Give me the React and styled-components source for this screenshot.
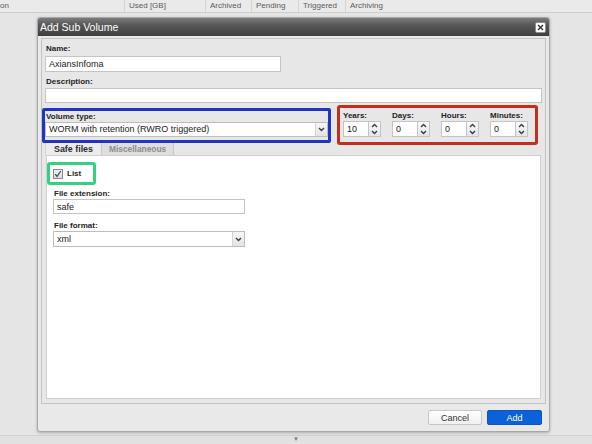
import React from "react";
import styled, { createGlobalStyle } from "styled-components";

const GlobalStyle = createGlobalStyle`
  html, body { margin: 0; padding: 0; }
  body { background: #e5e5e5; font-family: "Liberation Sans", Arial, sans-serif; }
  * { box-sizing: border-box; }
`;

const Page = styled.div`
  position: relative;
  width: 592px;
  height: 444px;
  overflow: hidden;
  display: flex;
  flex-direction: column;
  background: #e5e5e5;
`;

const GridHeader = styled.div`
  display: flex;
  height: 13px;
  border-bottom: 1px solid #cdcdcd;
  background: #eaeaea;
  font-size: 8px;
  color: #5a5a5a;
`;

const HeaderCell = styled.div`
  ${(p) => (p.$w ? `width: ${p.$w}px;` : "flex: 1;")}
  padding-left: ${(p) => p.$pad}px;
  line-height: 12px;
  white-space: nowrap;
  overflow: hidden;
  border-right: ${(p) => (p.$last ? "none" : "1px solid #d5d5d5")};
`;

const GridBody = styled.div`
  flex: 1;
`;

const BottomBar = styled.div`
  height: 9px;
  border-top: 1px solid #d2d2d2;
  background: #e1e1e1;
  display: flex;
  justify-content: center;
  font-size: 6px;
  line-height: 7px;
  color: #777;
`;

const Dialog = styled.div`
  position: absolute;
  left: 37px;
  top: 17px;
  width: 513px;
  height: 415px;
  background: #e9e9e9;
  border: 1px solid #a8a8a8;
  border-radius: 3px;
  box-shadow: 0 1px 3px rgba(0, 0, 0, 0.25);
  display: flex;
  flex-direction: column;
  overflow: hidden;
`;

const TitleBar = styled.div`
  height: 18px;
  flex: none;
  background: linear-gradient(to bottom, #7b7b7b 0%, #575757 40%, #3e3e3e 100%);
  color: #fff;
  font-size: 10.5px;
  display: flex;
  align-items: center;
  justify-content: space-between;
  padding: 0 3px 0 2px;
`;

const CloseBtn = styled.div`
  width: 11px;
  height: 11px;
  background: #fff;
  border: 1px solid #8e8e8e;
  border-radius: 2px;
  display: flex;
  align-items: center;
  justify-content: center;
`;

const Body = styled.div`
  flex: 1;
  padding: 2px 3px 0 3px;
  display: flex;
  flex-direction: column;
`;

const InnerPanel = styled.div`
  flex: 1;
  border: 1px solid #c3c3c3;
  background: #e7e7e7;
  padding: 0 3px 4px 3px;
  display: flex;
  flex-direction: column;
`;

const Label = styled.div`
  font-size: ${(p) => p.$size || 8}px;
  font-weight: bold;
  line-height: 10px;
  color: #1e1e1e;
  margin-top: ${(p) => p.$mt || 0}px;
  margin-left: 1px;
  white-space: nowrap;
`;

const TextInput = styled.div`
  width: ${(p) => (p.$w ? `${p.$w}px` : "100%")};
  height: ${(p) => p.$h || 16}px;
  margin-top: ${(p) => p.$mt || 0}px;
  background: #fff;
  border: 1px solid #c4c4c4;
  font-size: 9px;
  color: #222;
  padding-left: 3px;
  display: flex;
  align-items: center;
`;

const SelectBox = styled.div`
  width: ${(p) => (p.$w ? `${p.$w}px` : "100%")};
  height: ${(p) => p.$h || 16}px;
  background: #fff;
  border: 1px solid #bdbdbd;
  font-size: 9px;
  color: #222;
  display: flex;
  align-items: stretch;
`;

const SelectText = styled.div`
  flex: 1;
  padding-left: 3px;
  display: flex;
  align-items: center;
`;

const SelectArrow = styled.div`
  width: 12px;
  background: linear-gradient(to bottom, #f7f7f7, #e3e3e3);
  border-left: 1px solid #d4d4d4;
  display: flex;
  align-items: center;
  justify-content: center;
`;

const SettingsRow = styled.div`
  display: flex;
  align-items: center;
  margin-top: 2px;
`;

const TypeHighlight = styled.div`
  width: 289px;
  margin-left: -3px;
  border: 3px solid #1f35c4;
  border-radius: 2px;
  padding: 1px 0 3px 0;
  display: flex;
  flex-direction: column;
`;

const RetentionHighlight = styled.div`
  width: 201px;
  height: 40px;
  margin-left: 6px;
  border: 3px solid #c2301d;
  border-radius: 3px;
  padding: 3px 0 0 3px;
  display: flex;
`;

const SpinGroup = styled.div`
  width: 38px;
  margin-right: 11px;
  display: flex;
  flex-direction: column;
`;

const SpinRow = styled.div`
  display: flex;
  height: 16px;
`;

const SpinInput = styled.div`
  width: 26px;
  background: #fff;
  border: 1px solid #c4c4c4;
  font-size: 9px;
  color: #222;
  padding-left: 3px;
  display: flex;
  align-items: center;
`;

const SpinButtons = styled.div`
  width: 12px;
  border: 1px solid #c4c4c4;
  border-left: none;
  background: linear-gradient(to bottom, #fafafa, #e6e6e6);
  display: flex;
  flex-direction: column;
  align-items: center;
  justify-content: space-around;
`;

const TabStrip = styled.div`
  display: flex;
  height: 12px;
  margin-top: -2px;
`;

const Tab = styled.div`
  padding: 0 ${(p) => (p.$active ? 8 : 7)}px 0 ${(p) => (p.$active ? 8 : 7)}px;
  font-size: ${(p) => (p.$active ? 8.9 : 8.4)}px;
  font-weight: bold;
  line-height: 12px;
  color: ${(p) => (p.$active ? "#2a2a2a" : "#8c8c8c")};
  background: ${(p) => (p.$active ? "#ececec" : "#dedede")};
  border-right: 1px solid #c9c9c9;
  border-left: ${(p) => (p.$first ? "1px solid #d6d6d6" : "none")};
`;

const TabContent = styled.div`
  flex: 1;
  margin: 0 1px 0 1px;
  background: #fff;
  border: 1px solid #cfcfcf;
  padding: 6px 0 0 6px;
  display: flex;
  flex-direction: column;
`;

const ListHighlight = styled.div`
  width: 49px;
  height: 23px;
  margin-left: -6px;
  border: 3px solid #34d27f;
  border-radius: 3px;
  padding-left: 3px;
  display: flex;
  align-items: center;
  gap: 4px;
`;

const CheckBox = styled.div`
  width: 10px;
  height: 10px;
  border: 1px solid #8a8a8a;
  background: linear-gradient(to bottom, #f4f4f4, #dcdcdc);
  display: flex;
  align-items: center;
  justify-content: center;
`;

const CheckLabel = styled.span`
  font-size: 8px;
  font-weight: bold;
  color: #1e1e1e;
`;

const Footer = styled.div`
  height: 27px;
  flex: none;
  display: flex;
  justify-content: flex-end;
  align-items: center;
  gap: 5px;
  padding-right: 7px;
`;

const Button = styled.div`
  width: ${(p) => p.$w}px;
  height: 15px;
  border-radius: 2px;
  font-size: 9px;
  display: flex;
  align-items: center;
  justify-content: center;
  color: ${(p) => (p.$primary ? "#fff" : "#333")};
  background: ${(p) =>
    p.$primary ? "#0b62d8" : "linear-gradient(to bottom, #ffffff, #f0f0f0)"};
  border: 1px solid ${(p) => (p.$primary ? "#0a57c2" : "#c6c6c6")};
`;

const ChevronDown = () => (
  <svg width="7" height="5" viewBox="0 0 7 5">
    <polyline points="1,1 3.5,3.5 6,1" fill="none" stroke="#2f3a4a" strokeWidth="1.3" />
  </svg>
);

const ChevronUp = () => (
  <svg width="7" height="5" viewBox="0 0 7 5">
    <polyline points="1,4 3.5,1.5 6,4" fill="none" stroke="#2f3a4a" strokeWidth="1.3" />
  </svg>
);

const Spinner = ({ label, value }) => (
  <SpinGroup>
    <Label style={{ marginLeft: 0 }}>{label}</Label>
    <SpinRow>
      <SpinInput>{value}</SpinInput>
      <SpinButtons>
        <ChevronUp />
        <ChevronDown />
      </SpinButtons>
    </SpinRow>
  </SpinGroup>
);

const Select = ({ value, w, h }) => (
  <SelectBox $w={w} $h={h}>
    <SelectText>{value}</SelectText>
    <SelectArrow>
      <ChevronDown />
    </SelectArrow>
  </SelectBox>
);

export default function App() {
  return (
    <>
      <GlobalStyle />
      <Page>
        <GridHeader>
          <HeaderCell $w={125} $pad={0}>on</HeaderCell>
          <HeaderCell $w={81} $pad={4}>Used [GB]</HeaderCell>
          <HeaderCell $w={46} $pad={4}>Archived</HeaderCell>
          <HeaderCell $w={47} $pad={4}>Pending</HeaderCell>
          <HeaderCell $w={47} $pad={4}>Triggered</HeaderCell>
          <HeaderCell $pad={4} $last>Archiving</HeaderCell>
        </GridHeader>
        <GridBody />
        <BottomBar>▼</BottomBar>

        <Dialog>
          <TitleBar>
            <span>Add Sub Volume</span>
            <CloseBtn>
              <svg width="7" height="7" viewBox="0 0 7 7">
                <path d="M1 1 L6 6 M6 1 L1 6" stroke="#333" strokeWidth="1.4" />
              </svg>
            </CloseBtn>
          </TitleBar>
          <Body>
            <InnerPanel>
              <Label $mt={5}>Name:</Label>
              <TextInput $w={236} $mt={2}>AxiansInfoma</TextInput>
              <Label $mt={5}>Description:</Label>
              <TextInput $h={15} $mt={1} />
              <SettingsRow>
                <TypeHighlight>
                  <Label>Volume type:</Label>
                  <Select value="WORM with retention (RWRO triggered)" h={15} />
                </TypeHighlight>
                <RetentionHighlight>
                  <Spinner label="Years:" value="10" />
                  <Spinner label="Days:" value="0" />
                  <Spinner label="Hours:" value="0" />
                  <Spinner label="Minutes:" value="0" />
                </RetentionHighlight>
              </SettingsRow>
              <TabStrip>
                <Tab $active $first>Safe files</Tab>
                <Tab>Miscellaneous</Tab>
              </TabStrip>
              <TabContent>
                <ListHighlight>
                  <CheckBox>
                    <svg width="8" height="8" viewBox="0 0 8 8">
                      <polyline points="1.2,4.2 3,6.4 6.8,1" fill="none" stroke="#3a4a66" strokeWidth="1.2" />
                    </svg>
                  </CheckBox>
                  <CheckLabel>List</CheckLabel>
                </ListHighlight>
                <Label $mt={4}>File extension:</Label>
                <TextInput $w={192} $h={15}>safe</TextInput>
                <Label $mt={7}>File format:</Label>
                <Select value="xml" w={192} h={16} />
              </TabContent>
            </InnerPanel>
          </Body>
          <Footer>
            <Button $w={54}>Cancel</Button>
            <Button $w={55} $primary>Add</Button>
          </Footer>
        </Dialog>
      </Page>
    </>
  );
}
